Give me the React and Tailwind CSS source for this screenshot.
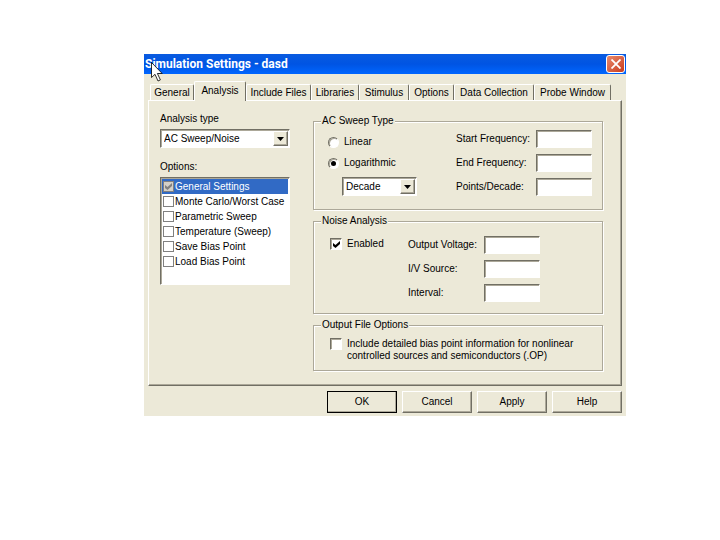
import React, { useState } from 'react';

const TABS = [
  { name: 'General', width: 'w-[44px]' },
  { name: 'Analysis', width: 'w-[52px]' },
  { name: 'Include Files', width: 'w-[65px]' },
  { name: 'Libraries', width: 'w-[48px]' },
  { name: 'Stimulus', width: 'w-[50px]' },
  { name: 'Options', width: 'w-[45px]' },
  { name: 'Data Collection', width: 'w-[80px]' },
  { name: 'Probe Window', width: 'w-[77px]' },
];

const OPTIONS = [
  'General Settings',
  'Monte Carlo/Worst Case',
  'Parametric Sweep',
  'Temperature (Sweep)',
  'Save Bias Point',
  'Load Bias Point',
];

const SUNKEN =
  'border border-t-[#716f64] border-l-[#716f64] border-r-white border-b-white bg-white shadow-[inset_1px_1px_0_#aca899]';
const RAISED =
  'border border-t-white border-l-white border-r-[#716f64] border-b-[#716f64] bg-[#ece9d8] shadow-[inset_-1px_-1px_0_#aca899]';

const Tick = ({ className = '' }) => (
  <svg viewBox="0 0 7 7" className={`pointer-events-none col-start-1 row-start-1 h-[7px] w-[7px] ${className}`} aria-hidden="true">
    <path d="M0 2v3l2.5 2L7 3V0L2.5 4z" fill="currentColor" />
  </svg>
);

const CheckBox = ({ id, flat = false, checked, disabled = false, onChange }) => (
  <span className="grid shrink-0 place-items-center">
    <input
      id={id}
      type="checkbox"
      checked={checked}
      disabled={disabled}
      onChange={onChange}
      className={`col-start-1 row-start-1 appearance-none ${
        flat
          ? 'h-[11px] w-[11px] border border-[#808080] bg-white disabled:bg-[#d4d0c8]'
          : `h-3 w-3 ${SUNKEN}`
      }`}
    />
    {checked && <Tick className={disabled ? 'text-[#808080]' : 'text-black'} />}
  </span>
);

const Select = ({ id, label, options, className = '' }) => (
  <div className={`relative h-[19px] ${className}`}>
    <select id={id} aria-label={label} className={`block h-full w-full appearance-none pl-[3px] pr-4 ${SUNKEN}`}>
      {options.map((option) => (
        <option key={option}>{option}</option>
      ))}
    </select>
    <span className={`pointer-events-none absolute inset-y-[2px] right-[2px] flex w-[15px] items-center justify-center ${RAISED}`}>
      <svg viewBox="0 0 7 4" className="h-1 w-[7px]" aria-hidden="true">
        <path d="M0 0h7L3.5 4z" fill="#000" />
      </svg>
    </span>
  </div>
);

const Group = ({ title, className = '', children }) => (
  <fieldset className="min-w-0 border border-[#aca899] shadow-[1px_1px_0_#fff,inset_1px_1px_0_#fff]">
    <legend className="ml-[7px] h-3 bg-[#ece9d8] px-px leading-3">{title}</legend>
    <div className={className}>{children}</div>
  </fieldset>
);

const Field = ({ id, label, className = '' }) => (
  <div className="flex h-[18px] items-center">
    <label htmlFor={id} className={`shrink-0 whitespace-nowrap ${className}`}>
      {label}
    </label>
    <input id={id} type="text" className={`h-[18px] w-14 px-1 ${SUNKEN}`} />
  </div>
);

const Button = ({ children, primary = false }) => (
  <button
    type="button"
    className={`flex h-[22px] w-[70px] items-center justify-center ${RAISED} ${
      primary ? 'outline outline-1 -outline-offset-1 outline-black' : ''
    }`}
  >
    {children}
  </button>
);

const App = () => {
  const [tab, setTab] = useState('Analysis');
  const [checked, setChecked] = useState(['General Settings']);
  const [sweep, setSweep] = useState('Logarithmic');
  const [noise, setNoise] = useState(true);
  const [detailed, setDetailed] = useState(false);

  const toggle = (name) => {
    setChecked(checked.includes(name) ? checked.filter((n) => n !== name) : [...checked, name]);
  };

  return (
    <main className="min-h-screen bg-white pt-[54px] pr-[94px] pl-36">
      <div className="bg-[#ece9d8] pb-[3px] font-['Liberation_Sans',sans-serif] text-[10px] leading-3 text-black">
        {/* Title bar */}
        <header className="relative flex h-5 items-center justify-between bg-linear-to-b from-[#0a5be0] via-[#0054e3] to-[#0066ff] pr-px pl-px">
          <h1 className="font-['Roboto',sans-serif] text-[12px] leading-4 font-bold whitespace-nowrap text-white">
            Simulation Settings - dasd
          </h1>
          <button
            type="button"
            aria-label="Close"
            className="flex h-[18px] w-[19px] items-center justify-center rounded-[3px] border border-white bg-linear-to-br from-[#e8896c] to-[#c8391b]"
          >
            <svg viewBox="0 0 10 10" className="h-[10px] w-[10px]" aria-hidden="true">
              <path d="M0.5 0.5l9 9M9.5 0.5l-9 9" stroke="#fff" strokeWidth="1.8" />
            </svg>
          </button>
          <svg viewBox="0 0 12 20" className="pointer-events-none absolute top-2 left-[7px] h-5 w-3" aria-hidden="true">
            <path d="M0.5 0.5v15l3.5-3.2 3 6.7 2.4-1.1-3-6.4h4.8z" fill="#fff" stroke="#000" strokeWidth="0.8" />
          </svg>
        </header>

        {/* Tabs */}
        <nav role="tablist" className="flex h-[26px] items-end pl-[6px]">
          {TABS.map(({ name, width }) => (
            <button
              key={name}
              type="button"
              role="tab"
              aria-selected={tab === name}
              onClick={() => setTab(name)}
              className={`shrink-0 rounded-t-[2px] border-t border-r border-l border-t-white border-r-[#716f64] border-l-white bg-[#ece9d8] whitespace-nowrap ${width} ${
                tab === name ? 'relative -mb-px h-5 pb-[2px]' : 'h-4'
              }`}
            >
              {name}
            </button>
          ))}
        </nav>

        {/* Analysis page */}
        <section className="mr-1 ml-1 flex gap-[23px] border border-t-white border-r-[#716f64] border-b-[#716f64] border-l-white pt-3 pr-[18px] pb-[14px] pl-[11px] shadow-[inset_-1px_-1px_0_#aca899]">
          <div className="w-[130px] shrink-0">
            <label htmlFor="analysis-type" className="block">
              Analysis type
            </label>
            <Select id="analysis-type" options={['AC Sweep/Noise', 'DC Sweep', 'Bias Point']} className="mt-1" />
            <p className="mt-[13px]">Options:</p>
            <ul className={`mt-1 h-[108px] p-px ${SUNKEN}`}>
              {OPTIONS.map((name, i) => (
                <li
                  key={name}
                  className={`flex h-[15px] items-center gap-px pl-px ${i === 0 ? 'bg-[#316ac5] text-white' : ''}`}
                >
                  <CheckBox
                    id={`option-${i}`}
                    flat
                    checked={checked.includes(name)}
                    disabled={i === 0}
                    onChange={() => toggle(name)}
                  />
                  <label htmlFor={`option-${i}`} className="whitespace-nowrap">
                    {name}
                  </label>
                </li>
              ))}
            </ul>
          </div>

          <div className="flex min-w-0 flex-1 flex-col gap-[5px] pt-[2px]">
            <Group title="AC Sweep Type" className="flex justify-between pt-[3px] pr-[10px] pb-[13px] pl-[14px]">
              <div className="pt-[6px]">
                <div className="mb-2 flex flex-col gap-[9px]">
                  {['Linear', 'Logarithmic'].map((name) => (
                    <label key={name} className="flex items-center gap-[5px]">
                      <span className="grid place-items-center">
                        <input
                          type="radio"
                          name="sweep"
                          checked={name === sweep}
                          onChange={() => setSweep(name)}
                          className={`col-start-1 row-start-1 h-[11px] w-[11px] appearance-none rounded-full ${SUNKEN}`}
                        />
                        {name === sweep && (
                          <span className="pointer-events-none col-start-1 row-start-1 h-[5px] w-[5px] rounded-full bg-black" />
                        )}
                      </span>
                      {name}
                    </label>
                  ))}
                </div>
                <Select id="sweep-scale" label="Sweep scale" options={['Decade', 'Octave']} className="ml-[14px] w-[75px]" />
              </div>
              <div className="flex flex-col gap-[6px]">
                <Field id="start" label="Start Frequency:" className="w-20" />
                <Field id="end" label="End Frequency:" className="w-20" />
                <Field id="points" label="Points/Decade:" className="w-20" />
              </div>
            </Group>

            <Group title="Noise Analysis" className="flex pt-[9px] pb-[11px] pl-4">
              <div className="flex h-4 w-[78px] items-center gap-[5px]">
                <CheckBox id="noise" checked={noise} onChange={() => setNoise(!noise)} />
                <label htmlFor="noise">Enabled</label>
              </div>
              <div className="flex flex-col gap-[6px]">
                <Field id="voltage" label="Output Voltage:" className="w-[76px]" />
                <Field id="source" label="I/V Source:" className="w-[76px]" />
                <Field id="interval" label="Interval:" className="w-[76px]" />
              </div>
            </Group>

            <Group title="Output File Options" className="flex items-start gap-[5px] pt-[7px] pb-2 pl-4">
              <CheckBox id="detailed" checked={detailed} onChange={() => setDetailed(!detailed)} />
              <label htmlFor="detailed">
                Include detailed bias point information for nonlinear
                <br />
                controlled sources and semiconductors (.OP)
              </label>
            </Group>
          </div>
        </section>

        <footer className="flex justify-end gap-[5px] pt-[5px] pr-1">
          <Button primary>OK</Button>
          <Button>Cancel</Button>
          <Button>Apply</Button>
          <Button>Help</Button>
        </footer>
      </div>
    </main>
  );
};

export default App;
